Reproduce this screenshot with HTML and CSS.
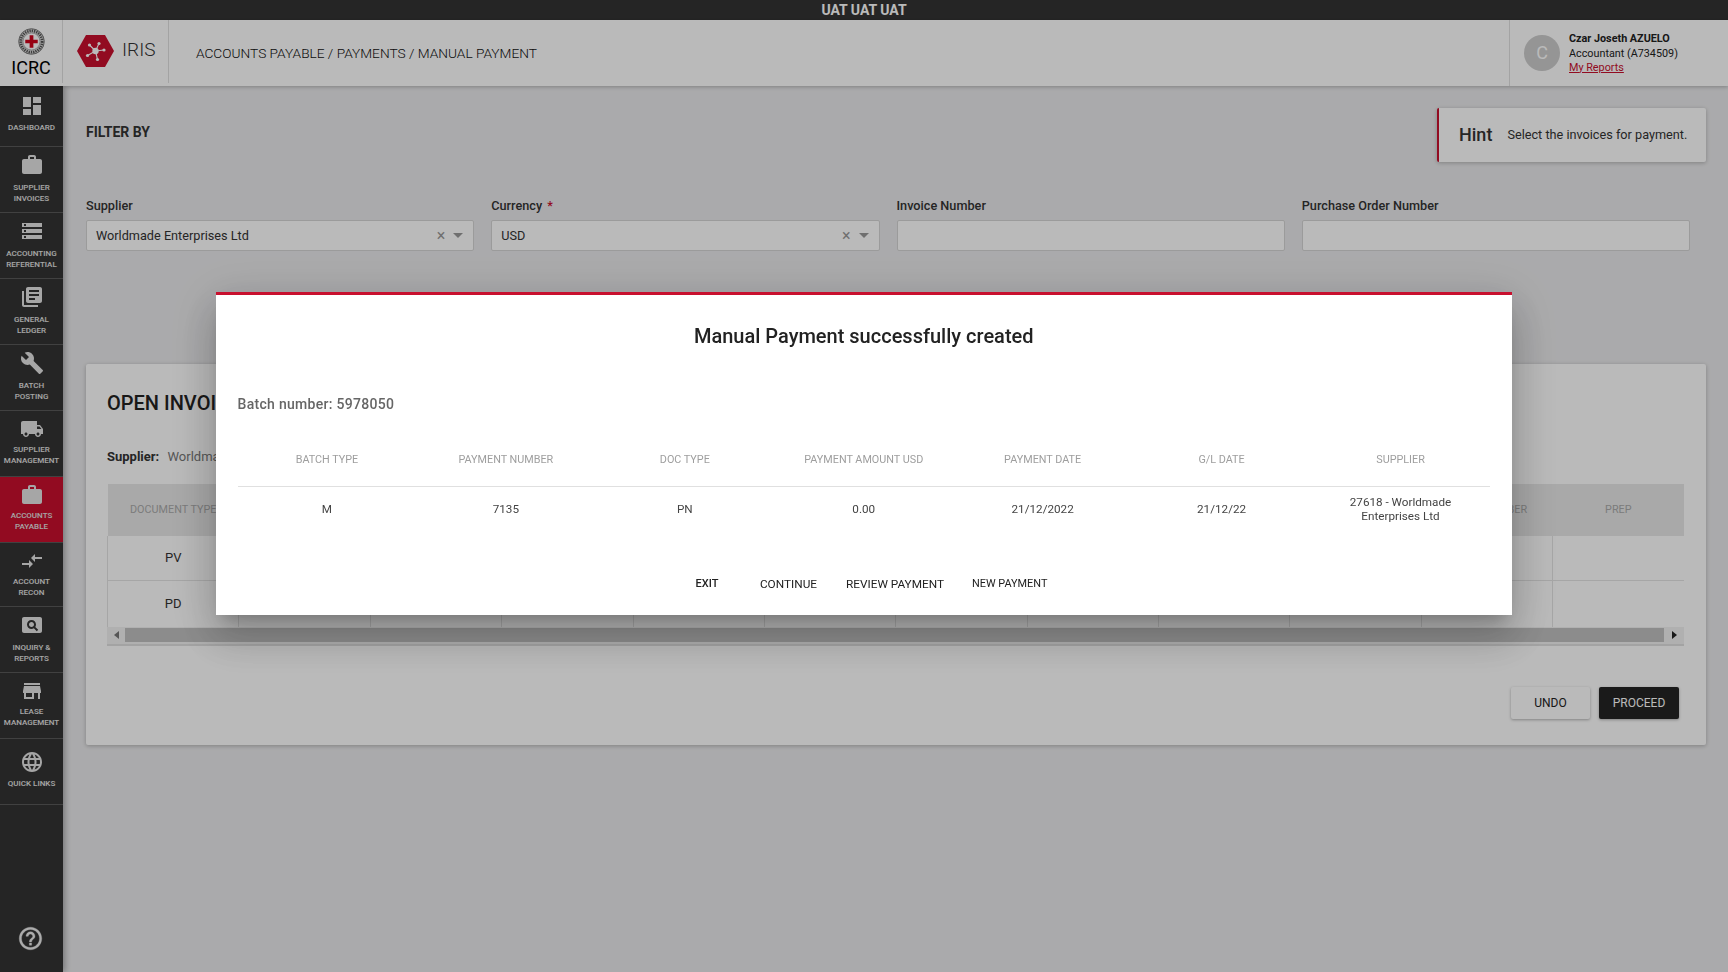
FILE: index.html
```html
<!DOCTYPE html>
<html lang="en">
<head>
  <meta charset="UTF-8">
  <title>IRIS - Manual Payment</title>
  <link rel="stylesheet" href="styles.css">
</head>
<body>
  <div class="env-bar">UAT UAT UAT</div>

  <header class="top-header">
    <div class="brand-icrc">
      <svg class="icrc-emblem" viewBox="0 0 26 26">
        <circle cx="13" cy="13" r="12.500" fill="#dcdcdc"/>
        <circle cx="13" cy="13" r="12.300" fill="none" stroke="#666" stroke-width="0.800"/>
        <circle cx="13" cy="13" r="10.300" fill="none" stroke="#555" stroke-width="2.600" stroke-dasharray="1.300 .9"/>
        <circle cx="13" cy="13" r="8.200" fill="#fff" stroke="#777" stroke-width="0.500"/>
        <path d="M11.200 7h3.600v4.200H19v3.600h-4.200V19h-3.600v-4.200H7v-3.600h4.200z" fill="#d0021b"/>
      </svg>
      <span class="icrc-name">ICRC</span>
    </div>
    <div class="brand-iris">
      <svg class="iris-hex" viewBox="0 0 37 32">
        <path d="M9 0h19l9 16-9 16H9L0 16z" fill="#c8102e"/>
        <g stroke="#fff" stroke-width="1.100">
          <path d="M18.500 16L12.500 10M18.500 16L22 8.500M18.500 16L27 15M18.500 16L20.500 24.500M18.500 16L10.500 20.500"/>
        </g>
        <g fill="#fff">
          <circle cx="18.500" cy="16" r="3.200"/>
          <circle cx="12.500" cy="10" r="1.600"/>
          <circle cx="22" cy="8.500" r="1.600"/>
          <circle cx="27" cy="15" r="1.600"/>
          <circle cx="20.500" cy="24.500" r="1.600"/>
          <circle cx="10.500" cy="20.500" r="1.600"/>
        </g>
      </svg>
      <span class="iris-name">IRIS</span>
    </div>
    <div class="breadcrumb">ACCOUNTS PAYABLE / PAYMENTS / MANUAL PAYMENT</div>
    <div class="user-box">
      <div class="avatar">C</div>
      <div class="user-info">
        <div class="user-name">Czar Joseth AZUELO</div>
        <div>Accountant (A734509)</div>
        <a href="#" class="user-link">My Reports</a>
      </div>
    </div>
  </header>

  <div class="layout">
    <nav class="sidebar">
      <a class="nav-item first" href="#">
        <svg viewBox="0 0 24 24"><path d="M3 13h8V3H3v10zm0 8h8v-6H3v6zm10 0h8V11h-8v10zm0-18v6h8V3h-8z"/></svg>
        <span>Dashboard</span>
      </a>
      <a class="nav-item" href="#">
        <svg viewBox="0 0 24 24"><path d="M20 6h-4V4c0-1.110-.89-2-2-2h-4c-1.110 0-2 .89-2 2v2H4c-1.110 0-1.990.89-1.990 2L2 19c0 1.110.89 2 2 2h16c1.110 0 2-.89 2-2V8c0-1.110-.89-2-2-2zm-6 0h-4V4h4v2z"/></svg>
        <span>Supplier<br>Invoices</span>
      </a>
      <a class="nav-item" href="#">
        <svg viewBox="0 0 24 24"><path d="M2 20h20v-4H2v4zm2-3h2v2H4v-2zM2 4v4h20V4H2zm4 3H4V5h2v2zm-4 7h20v-4H2v4zm2-3h2v2H4v-2z"/></svg>
        <span>Accounting<br>Referential</span>
      </a>
      <a class="nav-item" href="#">
        <svg viewBox="0 0 24 24"><path d="M4 6H2v14c0 1.100.9 2 2 2h14v-2H4V6zm16-4H8c-1.100 0-2 .9-2 2v12c0 1.100.9 2 2 2h12c1.100 0 2-.9 2-2V4c0-1.100-.9-2-2-2zm-1 9H9V9h10v2zm-4 4H9v-2h6v2zm4-8H9V5h10v2z"/></svg>
        <span>General<br>Ledger</span>
      </a>
      <a class="nav-item" href="#">
        <svg viewBox="0 0 24 24"><path d="M22.700 19l-9.100-9.100c.9-2.300.4-5-1.500-6.900-2-2-5-2.400-7.400-1.300L9 6 6 9 1.600 4.700C.4 7.100.9 10.100 2.900 12.100c1.900 1.900 4.600 2.400 6.900 1.500l9.100 9.100c.4.4 1 .4 1.400 0l2.300-2.300c.5-.4.5-1.100.1-1.400z"/></svg>
        <span>Batch<br>Posting</span>
      </a>
      <a class="nav-item tight" href="#">
        <svg viewBox="0 0 24 24"><path d="M20 8h-3V4H3c-1.100 0-2 .9-2 2v11h2c0 1.660 1.340 3 3 3s3-1.340 3-3h6c0 1.660 1.340 3 3 3s3-1.340 3-3h2v-5l-3-4zM6 18.500c-.83 0-1.500-.67-1.500-1.500s.67-1.500 1.500-1.500 1.500.67 1.500 1.500-.67 1.500-1.500 1.500zm13.500-9l1.960 2.500H17V9.500h2.500zm-1.500 9c-.83 0-1.500-.67-1.500-1.500s.67-1.500 1.500-1.500 1.500.67 1.500 1.500-.67 1.500-1.500 1.500z"/></svg>
        <span>Supplier<br>Management</span>
      </a>
      <a class="nav-item tight active" href="#">
        <svg viewBox="0 0 24 24"><path d="M20 6h-4V4c0-1.110-.89-2-2-2h-4c-1.110 0-2 .89-2 2v2H4c-1.110 0-1.990.89-1.990 2L2 19c0 1.110.89 2 2 2h16c1.110 0 2-.89 2-2V8c0-1.110-.89-2-2-2zm-6 0h-4V4h4v2z"/></svg>
        <span>Accounts<br>Payable</span>
      </a>
      <a class="nav-item short" href="#">
        <svg viewBox="0 0 24 24"><path d="M9.010 14H2v2h7.010v3L13 15l-3.990-4v3zm5.980-1v-3H22V8h-7.010V5L11 9l3.990 4z"/></svg>
        <span>Account<br>Recon</span>
      </a>
      <a class="nav-item" href="#">
        <svg viewBox="0 0 24 24"><path d="M11.500 9C10.120 9 9 10.120 9 11.500s1.120 2.500 2.500 2.500 2.500-1.120 2.500-2.500S12.880 9 11.500 9zM20 4H4c-1.100 0-2 .9-2 2v12c0 1.100.9 2 2 2h16c1.100 0 2-.9 2-2V6c0-1.100-.9-2-2-2zm-3.210 14.210l-2.910-2.910c-.69.44-1.510.7-2.380.7C9 16 7 14 7 11.500S9 7 11.500 7 16 9 16 11.500c0 .88-.26 1.690-.7 2.390l2.910 2.900-1.420 1.420z"/></svg>
        <span>Inquiry &amp;<br>Reports</span>
      </a>
      <a class="nav-item tight" href="#">
        <svg viewBox="0 0 24 24"><path d="M20 4H4v2h16V4zm1 10v-2l-1-5H4l-1 5v2h1v6h10v-6h4v6h2v-6h1zm-9 4H6v-4h6v4z"/></svg>
        <span>Lease<br>Management</span>
      </a>
      <a class="nav-item single" href="#">
        <svg viewBox="0 0 24 24"><path d="M11.990 2C6.470 2 2 6.480 2 12s4.470 10 9.990 10C17.520 22 22 17.520 22 12S17.520 2 11.990 2zm6.930 6h-2.950c-.32-1.250-.78-2.450-1.380-3.560 1.840.63 3.370 1.910 4.330 3.560zM12 4.040c.83 1.200 1.480 2.530 1.910 3.960h-3.820c.43-1.430 1.080-2.760 1.910-3.960zM4.260 14C4.100 13.360 4 12.690 4 12s.1-1.360.26-2h3.380c-.08.66-.14 1.320-.14 2 0 .68.06 1.340.14 2H4.260zm.82 2h2.950c.32 1.250.78 2.450 1.380 3.560-1.840-.63-3.370-1.900-4.330-3.560zm2.950-8H5.080c.96-1.660 2.490-2.930 4.330-3.560C8.810 5.550 8.350 6.750 8.030 8zM12 19.960c-.83-1.200-1.480-2.530-1.910-3.960h3.820c-.43 1.430-1.080 2.760-1.910 3.960zM14.340 14H9.660c-.09-.66-.16-1.320-.16-2 0-.68.07-1.350.16-2h4.680c.09.65.16 1.320.16 2 0 .68-.07 1.340-.16 2zm.25 5.560c.6-1.110 1.060-2.310 1.380-3.560h2.950c-.96 1.650-2.490 2.930-4.330 3.560zM16.360 14c.08-.66.14-1.320.14-2 0-.68-.06-1.340-.14-2h3.380c.16.64.26 1.310.26 2s-.1 1.360-.26 2h-3.380z"/></svg>
        <span>Quick Links</span>
      </a>
      <a class="help-link" href="#">
        <svg viewBox="0 0 24 24"><path d="M11 18h2v-2h-2v2zm1-16C6.480 2 2 6.480 2 12s4.480 10 10 10 10-4.480 10-10S17.520 2 12 2zm0 18c-4.410 0-8-3.590-8-8s3.590-8 8-8 8 3.590 8 8-3.590 8-8 8zm0-14c-2.210 0-4 1.790-4 4h2c0-1.100.9-2 2-2s2 .9 2 2c0 2-3 1.750-3 5h2c0-2.250 3-2.500 3-5 0-2.210-1.790-4-4-4z"/></svg>
      </a>
    </nav>

    <main class="content">
      <div class="filter-head">
        <h2 class="filter-title">FILTER BY</h2>
        <div class="hint">
          <strong>Hint</strong>
          <span>Select the invoices for payment.</span>
        </div>
      </div>

      <div class="filter-grid">
        <div class="field">
          <label>Supplier</label>
          <div class="select-box">
            <span>Worldmade Enterprises Ltd</span>
            <i class="clear">&times;</i><i class="caret"></i>
          </div>
        </div>
        <div class="field">
          <label>Currency <b class="req">*</b></label>
          <div class="select-box">
            <span>USD</span>
            <i class="clear">&times;</i><i class="caret"></i>
          </div>
        </div>
        <div class="field">
          <label>Invoice Number</label>
          <div class="select-box"></div>
        </div>
        <div class="field">
          <label>Purchase Order Number</label>
          <div class="select-box"></div>
        </div>
      </div>

      <section class="card">
        <h2 class="card-title">OPEN INVOICES</h2>
        <div class="supplier-line"><b>Supplier:</b> <span>Worldmade Enterprises Ltd</span></div>
        <table class="invoices">
          <thead>
            <tr>
              <th>DOCUMENT TYPE</th><th></th><th></th><th></th><th></th><th></th>
              <th></th><th></th><th></th><th></th><th>ORDER NUMBER</th><th>PREP</th>
            </tr>
          </thead>
          <tbody>
            <tr class="row-a">
              <td>PV</td><td></td><td></td><td></td><td></td><td></td>
              <td></td><td></td><td></td><td></td><td></td><td></td>
            </tr>
            <tr class="row-b">
              <td>PD</td><td></td><td></td><td></td><td></td><td></td>
              <td></td><td></td><td></td><td></td><td></td><td></td>
            </tr>
          </tbody>
        </table>
        <div class="h-scroll">
          <i class="arrow-left"></i>
          <div class="thumb"></div>
          <i class="arrow-right"></i>
        </div>
        <div class="card-actions">
          <button type="button" class="btn">UNDO</button>
          <button type="button" class="btn btn-dark">PROCEED</button>
        </div>
      </section>
    </main>
  </div>

  <div class="backdrop">
    <div class="modal">
      <h1 class="modal-title">Manual Payment successfully created</h1>
      <p class="batch">Batch number: 5978050</p>
      <table class="summary">
        <thead>
          <tr>
            <th>BATCH TYPE</th>
            <th>PAYMENT NUMBER</th>
            <th>DOC TYPE</th>
            <th>PAYMENT AMOUNT USD</th>
            <th>PAYMENT DATE</th>
            <th>G/L DATE</th>
            <th>SUPPLIER</th>
          </tr>
        </thead>
        <tbody>
          <tr>
            <td>M</td>
            <td>7135</td>
            <td>PN</td>
            <td>0.00</td>
            <td>21/12/2022</td>
            <td>21/12/22</td>
            <td>27618 - Worldmade<br>Enterprises Ltd</td>
          </tr>
        </tbody>
      </table>
      <div class="modal-actions">
        <button type="button" class="link-btn exit">EXIT</button>
        <button type="button" class="link-btn">CONTINUE</button>
        <button type="button" class="link-btn">REVIEW PAYMENT</button>
        <button type="button" class="link-btn small">NEW PAYMENT</button>
      </div>
    </div>
  </div>
</body>
</html>
```

FILE: styles.css
```css
* {
  box-sizing: border-box;
}
html, body {
  margin: 0;
  height: 100%;
  overflow: hidden;
}
body {
  font-family: Roboto, "Liberation Sans", sans-serif;
  font-size: 14px;
  color: #333;
  background: #eaeaec;
  display: flex;
  flex-direction: column;
}

/* top strips */
.env-bar {
  height: 20px;
  flex: none;
  background: #343434;
  color: #fff;
  font-size: 14px;
  font-weight: 700;
  line-height: 20px;
  text-align: center;
}
.top-header {
  height: 66px;
  flex: none;
  display: flex;
  background: #fff;
  box-shadow: 0 1px 4px rgba(0,0,0,0.25);
  position: relative;
  z-index: 2;
}
.brand-icrc {
  width: 63px;
  height: 63px;
  border-right: 1px solid #e0e0e0;
  display: flex;
  flex-direction: column;
  align-items: center;
  padding-top: 8px;
}
.icrc-emblem {
  width: 27px;
  height: 27px;
}
.icrc-name {
  font-size: 18px;
  line-height: 20px;
  margin-top: 3px;
  font-weight: 400;
  color: #000;
}
.brand-iris {
  width: 106px;
  height: 63px;
  border-right: 1px solid #e0e0e0;
  display: flex;
  padding: 15px 0 0 14px;
}
.iris-hex {
  width: 37px;
  height: 32px;
}
.iris-name {
  font-size: 19px;
  font-weight: 300;
  margin-left: 8px;
  line-height: 30px;
}
.breadcrumb {
  margin-left: 27px;
  font-size: 13.700px;
  font-weight: 300;
  line-height: 66px;
  color: #111;
  flex: 1;
}
.user-box {
  width: 219px;
  border-left: 1px solid #e0e0e0;
  height: 66px;
  display: flex;
  align-items: center;
  padding-left: 14px;
}
.avatar {
  width: 36px;
  height: 36px;
  border-radius: 50%;
  background: #ccc;
  color: #fff;
  font-size: 18px;
  text-align: center;
  line-height: 36px;
}
.user-info {
  margin: -2px 0 0 9px;
  font-size: 10.800px;
  line-height: 15px;
  color: #222;
}
.user-name {
  font-weight: 700;
}
.user-link {
  color: #c8102e;
  display: block;
  line-height: 13px;
}

/* sidebar */
.layout {
  flex: 1;
  display: flex;
  min-height: 0;
}
.sidebar {
  width: 63px;
  flex: none;
  background: #343434;
  box-shadow: 2px 0 6px rgba(0,0,0,0.3);
  display: flex;
  flex-direction: column;
  position: relative;
  z-index: 1;
}
.nav-item {
  height: 66px;
  flex: none;
  border-bottom: 1px solid #5a5a5a;
  color: #e4e4e4;
  text-decoration: none;
  font-size: 8px;
  font-weight: 500;
  line-height: 11px;
  text-align: center;
  text-transform: uppercase;
  display: flex;
  flex-direction: column;
  align-items: center;
  padding-top: 6px;
  white-space: nowrap;
}
.nav-item svg {
  width: 24px;
  height: 24px;
  fill: #e4e4e4;
  margin-bottom: 5px;
  flex: none;
}
.nav-item.first {
  height: 61px;
  padding-top: 8px;
}
.nav-item.first svg {
  margin-bottom: 4px;
}
.nav-item.tight svg {
  margin-bottom: 3px;
}
.nav-item.short {
  height: 64px;
  padding-top: 6px;
}
.nav-item.short svg {
  margin-bottom: 3px;
}
.nav-item.single {
  padding-top: 11px;
}
.nav-item.single svg {
  margin-bottom: 4px;
}
.nav-item.active {
  background: #c8102e;
}
.help-link {
  margin-top: auto;
  margin-bottom: 20px;
  margin-left: -2px;
  align-self: center;
}
.help-link svg {
  display: block;
  width: 27px;
  height: 27px;
  fill: #ececec;
  stroke: #ececec;
  stroke-width: 0.300;
}

/* filter part */
.content {
  flex: 1;
  min-width: 0;
  padding: 22px 22px 0 23px;
}
.filter-head {
  display: flex;
  justify-content: space-between;
  height: 54px;
}
.filter-title {
  margin: 16px 0 0;
  font-size: 14px;
  line-height: 16px;
  font-weight: 700;
}
.hint {
  width: 269px;
  background: #fff;
  border-left: 2px solid #c8102e;
  border-radius: 2px;
  box-shadow: 0 1px 4px rgba(0,0,0,0.25);
  display: flex;
  align-items: center;
  padding-left: 20px;
  padding-bottom: 2px;
}
.hint strong {
  font-size: 18px;
  font-weight: 500;
  margin-right: 15px;
}
.hint span {
  font-size: 12.700px;
}
.filter-grid {
  display: grid;
  grid-template-columns: repeat(4, 1fr);
  gap: 17px;
  margin-top: 36px;
  padding-right: 16px;
}
.field label {
  display: block;
  font-size: 12.700px;
  font-weight: 500;
  line-height: 16px;
  margin-bottom: 6px;
}
.req {
  color: #c8102e;
  font-weight: 500;
  margin-left: 2px;
}
.select-box {
  height: 31px;
  background: #fff;
  border: 1px solid #d5d5d5;
  border-radius: 2px;
  display: flex;
  align-items: center;
  padding: 0 10px 0 9px;
  font-size: 12.700px;
}
.select-box span {
  flex: 1;
}
.clear {
  font-style: normal;
  font-size: 16px;
  color: #999;
  margin-right: 8px;
}
.caret {
  width: 0;
  height: 0;
  border-left: 5px solid transparent;
  border-right: 5px solid transparent;
  border-top: 5px solid #999;
}

/* open invoices */
.card {
  margin-top: 113px;
  background: #fff;
  border-radius: 2px;
  box-shadow: 0 1px 4px rgba(0,0,0,0.25);
  padding: 27px 22px 26px 21px;
  height: 381px;
}
.card-title {
  margin: 0;
  font-size: 20px;
  font-weight: 500;
  line-height: 24px;
  color: #222;
}
.supplier-line {
  margin-top: 34px;
  font-size: 13px;
  line-height: 16px;
}
.supplier-line b {
  font-weight: 700;
  margin-right: 5px;
}
.supplier-line span {
  color: #777;
}
.invoices {
  width: 100%;
  margin-top: 19px;
  table-layout: fixed;
  border-collapse: collapse;
  text-align: center;
}
.invoices th {
  height: 52px;
  padding-bottom: 2px;
  background: #e8e8e8;
  color: #aaa;
  font-size: 10.800px;
  font-weight: 400;
  white-space: nowrap;
}
.invoices td {
  font-size: 13px;
  border-left: 1px solid #e4e4e4;
  border-bottom: 1px solid #e4e4e4;
}
.row-a td {
  height: 44px;
}
.row-b td {
  height: 47px;
  border-bottom: none;
}
.h-scroll {
  height: 19px;
  display: flex;
  align-items: center;
  background: #f1f1f1;
  border-bottom: 2px solid #e0e0e0;
  padding-bottom: 1px;
}
.thumb {
  flex: 1;
  height: 14px;
  background: #c1c1c1;
}
.arrow-left, .arrow-right {
  width: 18px;
  flex: none;
  display: flex;
  justify-content: center;
}
.arrow-left::before, .arrow-right::before {
  content: "";
  border-top: 4px solid transparent;
  border-bottom: 4px solid transparent;
}
.arrow-left::before {
  border-right: 5px solid #777;
}
.arrow-right::before {
  border-left: 5px solid #222;
}
.arrow-right {
  width: 20px;
}
.card-actions {
  display: flex;
  justify-content: flex-end;
  gap: 9px;
  margin-top: 41px;
  padding-right: 5px;
}
.btn {
  width: 79px;
  height: 32px;
  border: none;
  border-radius: 2px;
  background: #fff;
  color: #222;
  font-family: inherit;
  font-size: 12px;
  font-weight: 400;
  box-shadow: 0 1px 3px rgba(0,0,0,0.3);
}
.btn-dark {
  width: 80px;
  background: #242424;
  color: #fff;
}

/* dialog */
.backdrop {
  position: fixed;
  top: 0;
  left: 0;
  right: 0;
  bottom: 0;
  z-index: 10;
  background: rgba(0,0,0,0.27);
  display: flex;
  justify-content: center;
  align-items: flex-start;
  padding-top: 292px;
}
.modal {
  width: 1296px;
  height: 323px;
  background: #fff;
  border-top: 3px solid #c8102e;
  padding: 27px 22px 0 21.500px;
  box-shadow: 0 11px 15px -7px rgba(0,0,0,0.2), 0 24px 38px 3px rgba(0,0,0,0.14), 0 9px 46px 8px rgba(0,0,0,0.12);
}
.modal-title {
  margin: 0;
  font-size: 20px;
  font-weight: 500;
  line-height: 28px;
  text-align: center;
  color: #222;
}
.batch {
  margin: 44px 0 0;
  font-size: 14px;
  font-weight: 500;
  line-height: 20px;
  letter-spacing: 0.300px;
  color: #666;
}
.summary {
  width: 100%;
  margin-top: 18px;
  table-layout: fixed;
  border-collapse: collapse;
  text-align: center;
}
.summary th {
  height: 54px;
  padding-top: 2px;
  border-bottom: 1px solid #e0e0e0;
  font-size: 10.800px;
  font-weight: 400;
  color: #9e9e9e;
}
.summary td {
  height: 45px;
  font-size: 11.700px;
  font-weight: 400;
  line-height: 14px;
  color: #444;
}
.modal-actions {
  display: flex;
  justify-content: center;
  margin-top: 35px;
  padding-left: 9px;
}
.link-btn {
  height: 36px;
  border: none;
  background: none;
  font-family: inherit;
  font-size: 11.800px;
  font-weight: 400;
  color: #222;
  padding: 0 14.500px;
}
.link-btn.exit {
  font-weight: 500;
  font-size: 11px;
  padding: 0 27px 0 21px;
  position: relative;
  top: -1px;
}
.link-btn.small {
  font-size: 10.900px;
  padding-left: 13.500px;
  position: relative;
  top: -1px;
}
```
